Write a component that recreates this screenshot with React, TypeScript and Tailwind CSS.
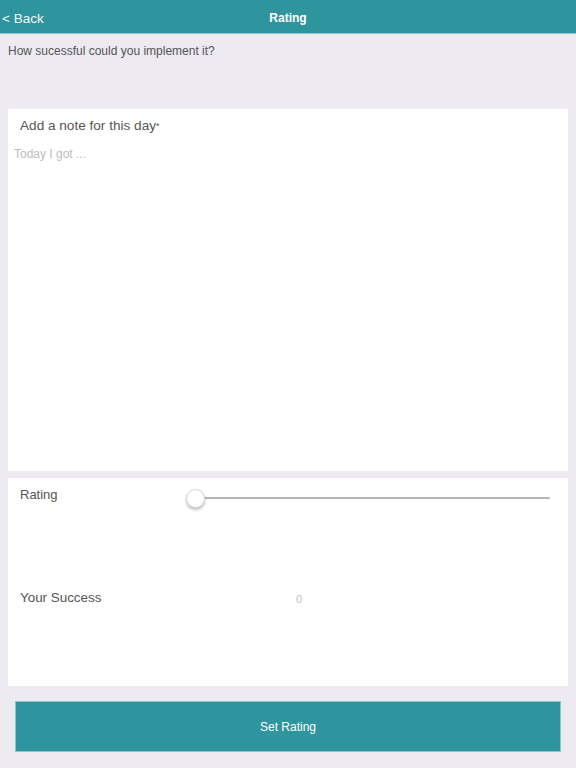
export default function App() {
  return (
    <div
      className="w-[576px] h-[768px] bg-[#edeaf1] flex flex-col overflow-hidden"
      style={{ fontFamily: '"Liberation Sans", Arial, sans-serif' }}
    >
      {/* nav bar */}
      <div className="h-[34px] bg-[#2e959f] border-b border-[#8cc6cb] flex items-center relative shrink-0">
        <span className="absolute left-[2px] top-[10px] text-[13.5px] leading-[18px] text-[#f2fafa]">&lt; Back</span>
        <span className="w-full pt-[2px] text-center text-[12px] font-bold text-white">Rating</span>
      </div>

      <div className="px-2 pt-[10px] h-[75px] text-[12px] leading-[15px] text-[#555]">
        How sucessful could you implement it?
      </div>

      {/* note card */}
      <div className="mx-2 h-[362px] bg-white flex flex-col">
        <div className="pl-3 pt-[8px] text-[13.6px] leading-[18px] text-[#555]">
          Add a note for this day<span className="text-[9px] align-top">*</span>
        </div>
        <div className="pl-[6px] pt-[12px] text-[12px] leading-[15px] text-[#bcbcbc]">Today I got ...</div>
      </div>

      {/* rating card */}
      <div className="mx-2 mt-[7px] h-[208px] bg-white flex flex-col">
        <div className="flex items-start pt-[9px] pl-3 h-[112px]">
          <span className="w-[167px] text-[13px] leading-[16px] text-[#555]">Rating</span>
          <div className="relative flex-1 mr-[18px] h-[24px]">
            <div className="absolute left-[8px] right-0 top-[10px] h-[2px] bg-[#b5b5b5] rounded" />
            <div className="absolute left-[-1px] top-[2px] w-[19px] h-[19px] rounded-full bg-white border border-[#d6d6d6] shadow-[0_2px_3px_rgba(0,0,0,0.25)]" />
          </div>
        </div>
        <div className="flex items-start pl-3">
          <span className="w-[276px] text-[13.4px] leading-[16px] text-[#555]">Your Success</span>
          <span className="text-[11px] leading-[16px] pt-[1px] text-[#c4c4c4]">0</span>
        </div>
      </div>

      {/* button */}
      <div className="ml-[15px] mr-[15px] mt-[15px] h-[51px] bg-[#2e959f] border border-[#8cc6cb] flex items-center justify-center">
        <span className="text-[12px] text-white">Set Rating</span>
      </div>
    </div>
  );
}
